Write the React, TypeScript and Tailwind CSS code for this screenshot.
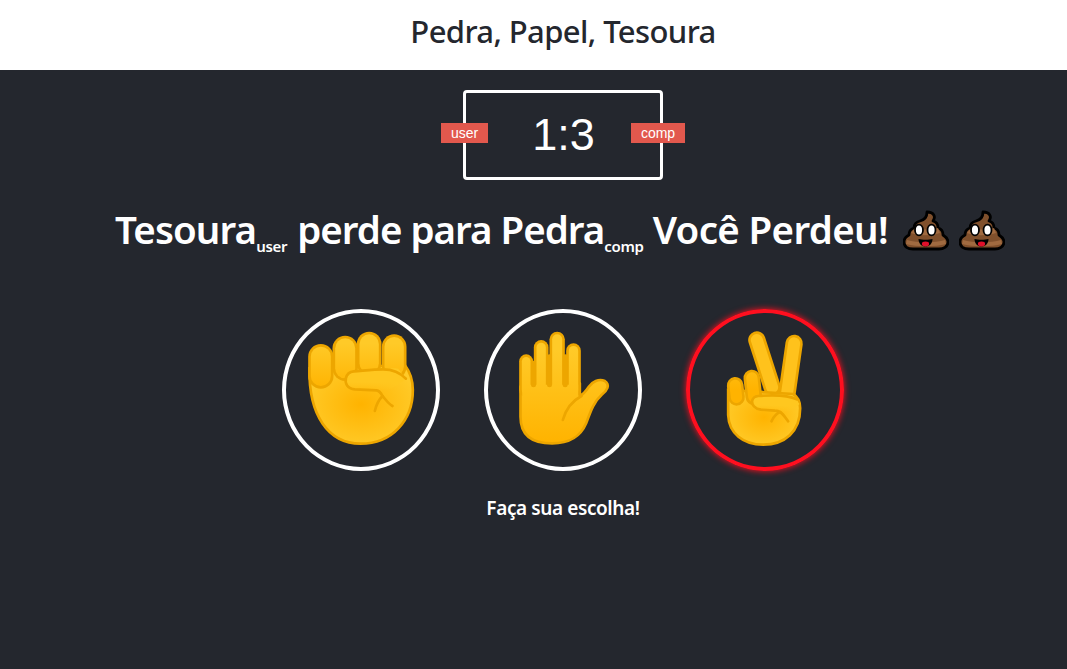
const ACTION = "Noto Sans";

const HandDefs = () => (
  <svg width="0" height="0" className="absolute">
    <defs>
      <linearGradient id="skin" gradientUnits="userSpaceOnUse" x1="0" y1="150" x2="0" y2="430">
        <stop offset="0" stopColor="#ffca28" />
        <stop offset="1" stopColor="#ffb300" />
      </linearGradient>
      <linearGradient id="knuckle" gradientUnits="userSpaceOnUse" x1="0" y1="130" x2="0" y2="270">
        <stop offset="0" stopColor="#ffca28" />
        <stop offset="1" stopColor="#ffb300" />
      </linearGradient>
      <linearGradient id="thumb" x1="0" y1="0" x2="0" y2="1">
        <stop offset="0" stopColor="#ffc71f" />
        <stop offset="0.6" stopColor="#ffc71f" />
        <stop offset="1" stopColor="#ffc71f" stopOpacity="0" />
      </linearGradient>
      <radialGradient id="palm" cx="0.5" cy="0.5" r="0.55">
        <stop offset="0" stopColor="#ffb300" />
        <stop offset="1" stopColor="#ffca28" />
      </radialGradient>
    </defs>
  </svg>
);

// thick round line used for the fingers
const Finger = ({ d, w, fill = "url(#knuckle)" }: { d: string; w: number; fill?: string }) => (
  <>
    <path d={d} fill="none" stroke="#eda600" strokeWidth={w} strokeLinecap="round" />
    <path d={d} fill="none" stroke={fill} strokeWidth={w - 16} strokeLinecap="round" />
  </>
);

const Line = ({ d }: { d: string }) => (
  <path d={d} fill="none" stroke="#eda600" strokeWidth="8" strokeLinecap="round" strokeLinejoin="round" />
);

const Rock = () => (
  <svg viewBox="49 39 449 462" className="w-full h-full">
    <path
      d="M119 205 C116 345 175 431 272 431 C368 431 429 360 429 270 C429 240 420 215 405 195 Z"
      fill="url(#palm)"
      stroke="#eda600"
      strokeWidth="8"
    />
    <Finger d="M153 170 L153 228" w={76} />
    <Finger d="M226 145 L226 205" w={76} />
    <Finger d="M298 132 L298 190" w={74} />
    <Finger d="M373 140 L373 200" w={74} />
    <path
      d="M252 214 C300 208 350 203 385 206 L408 236 C395 250 360 272 335 272 L255 268 C232 266 225 250 228 235 C231 222 240 215 252 214 Z"
      fill="url(#thumb)"
    />
    <Line d="M408 236 C395 222 375 208 340 208 C310 208 280 212 252 214 C240 215 231 222 228 235 C225 250 232 266 255 268 L320 271 C328 272 334 280 338 288" />
    <Line d="M315 333 C319 315 328 298 338 288 C347 298 356 312 368 318" />
  </svg>
);

const Paper = () => (
  <svg viewBox="39 39 447 462" className="w-full h-full">
    <path
      d="M135 260 L135 350 C135 405 170 430 230 430 C285 430 315 410 332 370 C345 335 355 305 378 285 C395 272 405 255 388 243 C370 235 350 245 340 260 C332 272 325 282 313 288 L313 250 Z"
      fill="url(#skin)"
      stroke="#eda600"
      strokeWidth="8"
      strokeLinejoin="round"
    />
    <Finger d="M152 184 L152 270" w={42} fill="url(#skin)" />
    <Finger d="M197 142 L197 270" w={44} fill="url(#skin)" />
    <Finger d="M245 118 L245 270" w={46} fill="url(#skin)" />
    <Finger d="M294 152 L294 270" w={44} fill="url(#skin)" />
    <path d="M140 254 L308 254 L308 300 L140 300 Z" fill="url(#skin)" />
    <path d="M174 190 L174 254 M222 170 L222 254 M269 170 L269 254" stroke="#eda600" strokeWidth="15" strokeLinecap="round" fill="none" />
    <path d="M262 360 C272 325 295 300 318 288" fill="none" stroke="#eda600" strokeWidth="8" strokeLinecap="round" />
  </svg>
);

const Scissors = () => (
  <svg viewBox="46 39 449 462" className="w-full h-full">
    <Finger d="M246 120 L292 262" w={52} fill="#ffc21c" />
    <Finger d="M358 130 L336 285" w={52} fill="#ffc21c" />
    <path
      d="M160 270 L160 345 C162 400 205 434 265 434 C330 434 376 395 376 325 C376 305 368 290 355 282 Z"
      fill="url(#palm)"
      stroke="#eda600"
      strokeWidth="8"
    />
    <Finger d="M231 234 L237 290" w={50} />
    <Finger d="M181 256 L185 292" w={50} />
    <path
      d="M250 288 C290 284 330 284 358 290 L374 312 C360 326 340 336 318 336 L258 330 C240 326 230 312 232 302 C234 294 240 289 250 288 Z"
      fill="url(#thumb)"
    />
    <Line d="M366 298 C345 288 300 284 250 288 C240 289 234 294 232 302 C230 314 240 326 258 329 L300 332 C306 332 312 333 316 336" />
    <Line d="M290 364 C296 350 306 340 316 336 C326 342 332 355 340 364" />
  </svg>
);

const Poop = ({ gap }: { gap: string }) => (
  <svg viewBox="0 0 46 42" className={`inline-block w-[46px] h-[42px] ${gap}`}>
    <path
      d="M24 3 C31 3 33 8 30 12 C34 13 35 16 35 19 C39 20 40 23 40 26 C43 28 45 31 45 33 C45 38 40 40 36 40 L10 40 C5 40 1 38 1 33 C1 29 4 27 6 26 C6 22 8 20 11 19 C11 15 13 13 17 12 C21 11 24 8 24 3 Z"
      fill="#80502c"
      stroke="#000"
      strokeWidth="2.8"
      strokeLinejoin="round"
    />
    <path d="M12 19 C18 21 29 21 35 19 L37 24 C28 27 16 27 8 24 Z M4 31 C14 34 32 34 42 31 L43 35 C32 38 14 38 3 35 Z" fill="#a06a40" />
    <ellipse cx="16" cy="21" rx="4" ry="5.4" fill="#fff" stroke="#000" strokeWidth="1.8" />
    <ellipse cx="28.5" cy="21" rx="4" ry="5.4" fill="#fff" stroke="#000" strokeWidth="1.8" />
    <path d="M15.5 30 C19 31 26 31 29.5 30 C29.5 35 26 37.5 22.5 37.5 C19 37.5 15.5 35 15.5 30 Z" fill="#000" />
    <ellipse cx="22.5" cy="35" rx="3.6" ry="2.4" fill="#e0102a" />
  </svg>
);

const Choice = ({ active, children }: { active?: boolean; children: React.ReactNode }) => (
  <div
    className={
      active
        ? "w-[158px] h-[162px] rounded-[50%] border-4 border-[#ff0f1f] shadow-[0_0_6px_#ff0f1f]"
        : "w-[158px] h-[162px] rounded-[50%] border-4 border-white"
    }
  >
    {children}
  </div>
);

export default function App() {
  return (
    <div className="h-screen overflow-hidden bg-[#24272e]">
      <HandDefs />
      {/* page is wider than the window in the reference, so the content sits right of center */}
      <div className="w-[1126px] text-white" style={{ fontFamily: `"${ACTION}", sans-serif` }}>
        <header className="h-[70px] bg-white flex items-center justify-center pb-[8px]">
          <h1 className="text-[#24272e] text-[31px] font-medium tracking-[-0.6px]">Pedra, Papel, Tesoura</h1>
        </header>

        <div className="relative mx-auto mt-5 w-[200px] h-[90px] border-[3px] border-white rounded flex items-center justify-center pl-[1px] font-['Liberation_Sans',sans-serif] text-[45px]">
          1:3
          <span className="absolute left-[-25px] top-[30px] w-[47px] h-[20px] bg-[#e2584d] text-[14px] leading-[20px] text-center">
            user
          </span>
          <span className="absolute right-[-25px] top-[30px] w-[54px] h-[20px] bg-[#e2584d] text-[14px] leading-[20px] text-center">
            comp
          </span>
        </div>

        <div className="mt-[24px] h-[52px] flex items-center justify-center pr-[6px] text-[38.5px] font-semibold tracking-[-0.9px] whitespace-nowrap">
          <span>Tesoura</span>
          <span className="text-[15px] font-semibold self-end mb-[-1px] mr-[10px] tracking-[-0.3px]">user</span>
          <span className="tracking-[-1px]">perde para Pedra</span>
          <span className="text-[15px] font-semibold self-end mb-[-1px] mr-[9px] tracking-[-0.3px]">comp</span>
          <span className="tracking-[-0.65px]">Você Perdeu!</span>
          <Poop gap="ml-[15px]" />
          <Poop gap="ml-[10px]" />
        </div>

        <div className="mt-[53px] flex justify-center gap-[44px]">
          <Choice>
            <Rock />
          </Choice>
          <Choice>
            <Paper />
          </Choice>
          <Choice active>
            <Scissors />
          </Choice>
        </div>

        <p className="mt-[23px] text-center text-[19px] font-semibold tracking-[-0.4px]">Faça sua escolha!</p>
      </div>
    </div>
  );
}
